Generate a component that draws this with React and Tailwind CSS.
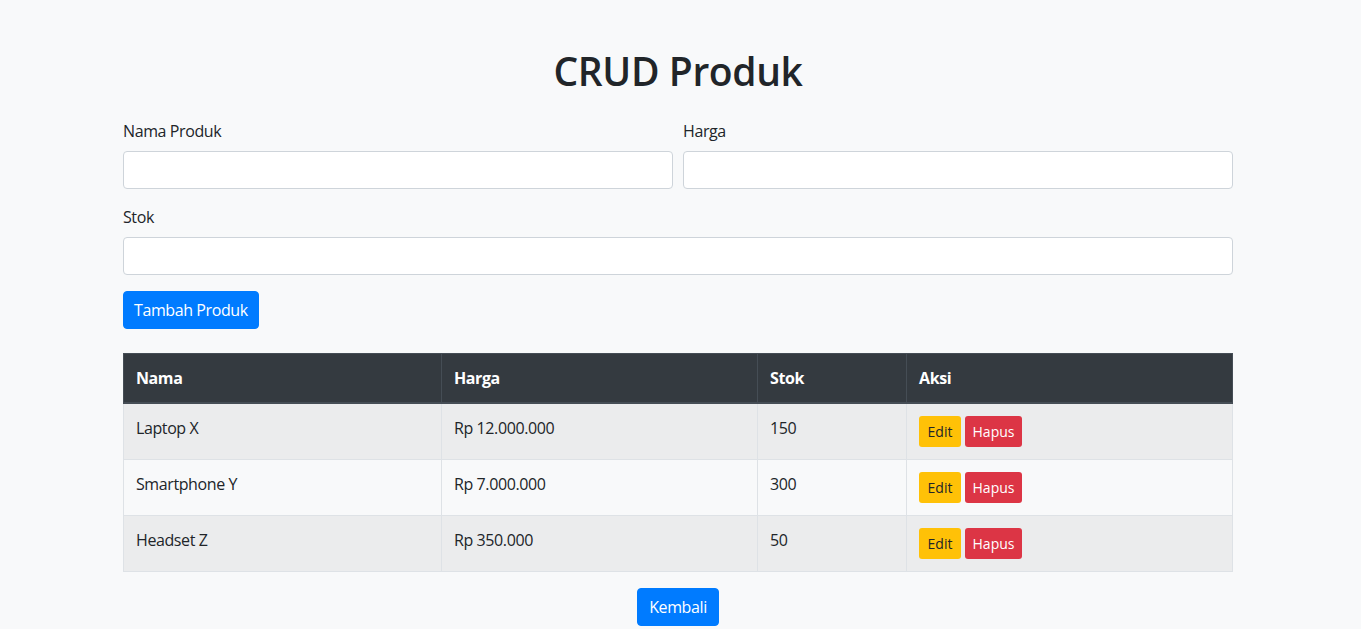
export default function App() {
  const rows = [
    { nama: "Laptop X", harga: "Rp 12.000.000", stok: "150" },
    { nama: "Smartphone Y", harga: "Rp 7.000.000", stok: "300" },
    { nama: "Headset Z", harga: "Rp 350.000", stok: "50" },
  ];
  const font = { fontFamily: '"Segoe UI", "Open Sans", "Noto Sans", sans-serif' };
  return (
    <div className="min-h-screen bg-[#f8f9fa] text-[#212529] text-base leading-6 tracking-[-0.025em]" style={font}>
      <div className="w-[1110px] ml-[123px] pt-[47px]">
        <h1 className="text-center text-[39px] leading-[48px] font-semibold mb-6 text-[#212529] tracking-[-0.01em]">CRUD Produk</h1>
        <div className="flex gap-[10px]">
          <div className="flex-1 mb-4">
            <label className="block mb-2">Nama Produk</label>
            <input className="block w-full h-[38px] bg-white border border-[#ced4da] rounded px-3" />
          </div>
          <div className="flex-1 mb-4">
            <label className="block mb-2">Harga</label>
            <input className="block w-full h-[38px] bg-white border border-[#ced4da] rounded px-3" />
          </div>
        </div>
        <div className="mb-4">
          <label className="block mb-2">Stok</label>
          <input className="block w-full h-[38px] bg-white border border-[#ced4da] rounded px-3" />
        </div>
        <button className="h-[38px] px-[10px] bg-[#007bff] text-white rounded border border-[#007bff] leading-6">Tambah Produk</button>
        <table className="w-full mt-6 mb-4 border border-[#dee2e6]">
          <thead>
            <tr className="bg-[#343a40] text-white">
              <th className="w-[318px] text-left font-bold px-3 py-3 border border-[#454d55] border-b-2">Nama</th>
              <th className="w-[316px] text-left font-bold px-3 py-3 border border-[#454d55] border-b-2">Harga</th>
              <th className="w-[149px] text-left font-bold px-3 py-3 border border-[#454d55] border-b-2">Stok</th>
              <th className="text-left font-bold px-3 py-3 border border-[#454d55] border-b-2">Aksi</th>
            </tr>
          </thead>
          <tbody>
            {rows.map((r, i) => (
              <tr key={i} className={i % 2 === 0 ? "bg-[#ebeced]" : "bg-[#f8f9fa]"}>
                <td className="align-top p-3 border border-[#dee2e6]">{r.nama}</td>
                <td className="align-top p-3 border border-[#dee2e6]">{r.harga}</td>
                <td className="align-top p-3 border border-[#dee2e6]">{r.stok}</td>
                <td className="align-top p-3 border border-[#dee2e6]">
                  <div className="flex gap-1">
                    <button className="w-[42px] h-[31px] text-sm leading-[21px] tracking-normal bg-[#ffc107] text-[#212529] rounded-[3px]">Edit</button>
                    <button className="w-[57px] h-[31px] text-sm leading-[21px] tracking-normal bg-[#dc3545] text-white rounded-[3px]">Hapus</button>
                  </div>
                </td>
              </tr>
            ))}
          </tbody>
        </table>
        <div className="flex justify-center">
          <button className="h-[38px] px-[11px] bg-[#007bff] text-white rounded border border-[#007bff] leading-6">Kembali</button>
        </div>
      </div>
    </div>
  );
}
